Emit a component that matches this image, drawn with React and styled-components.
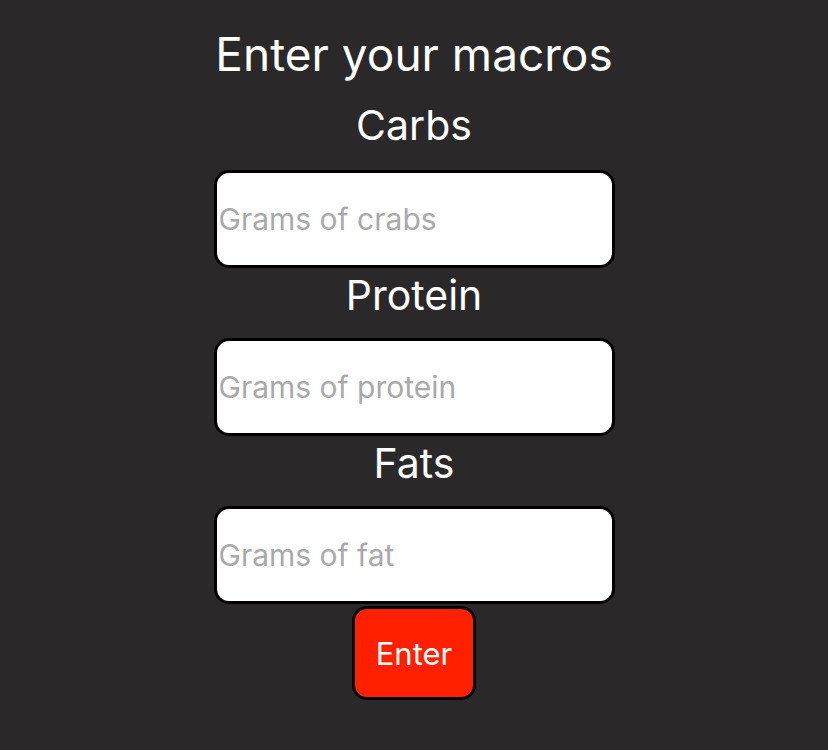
import React from "react";
import styled, { createGlobalStyle } from "styled-components";

const Global = createGlobalStyle`
  html, body { margin: 0; padding: 0; background: #2a2829; }
  body { font-family: Inter, "Noto Sans", sans-serif; }
`;

const Page = styled.div`
  min-height: 750px;
  background: #2a2829;
  display: flex;
  flex-direction: column;
  align-items: center;
  padding-top: 28px;
  box-sizing: border-box;
`;

const Title = styled.h1`
  margin: 0;
  font-size: 46px;
  font-weight: 400;
  line-height: 52px;
  color: #ffffff;
`;

const Label = styled.div`
  box-sizing: border-box;
  font-size: 41px;
  line-height: 50px;
  color: #ffffff;
  height: ${(p) => p.$h}px;
  padding-bottom: ${(p) => p.$pb}px;
  display: flex;
  align-items: center;
  justify-content: center;
`;

const Field = styled.input`
  box-sizing: border-box;
  width: 401px;
  height: 98px;
  border: 3px solid #000;
  border-radius: 15px;
  background: #fff;
  padding: 0 2px;
  font-family: Inter, "Noto Sans", sans-serif;
  font-size: 30px;
  color: #000;
  outline: none;
  &::placeholder { color: #a9a9a9; }
`;

const Button = styled.button`
  box-sizing: border-box;
  margin-top: 2px;
  width: 124px;
  height: 94px;
  border: 3px solid #000;
  border-radius: 15px;
  background: #ff2000;
  color: #fff;
  font-family: Inter, "Noto Sans", sans-serif;
  font-size: 31px;
  cursor: pointer;
`;

const fields = [
  { label: "Carbs", placeholder: "Grams of crabs" },
  { label: "Protein", placeholder: "Grams of protein" },
  { label: "Fats", placeholder: "Grams of fat" },
];

export default function App() {
  return (
    <Page>
      <Global />
      <Title>Enter your macros</Title>
      {fields.map((f, i) => (
        <React.Fragment key={f.label}>
          <Label $h={i === 0 ? 90 : 70} $pb={i === 0 ? 0 : 16}>
            {f.label}
          </Label>
          <Field placeholder={f.placeholder} />
        </React.Fragment>
      ))}
      <Button>Enter</Button>
    </Page>
  );
}
